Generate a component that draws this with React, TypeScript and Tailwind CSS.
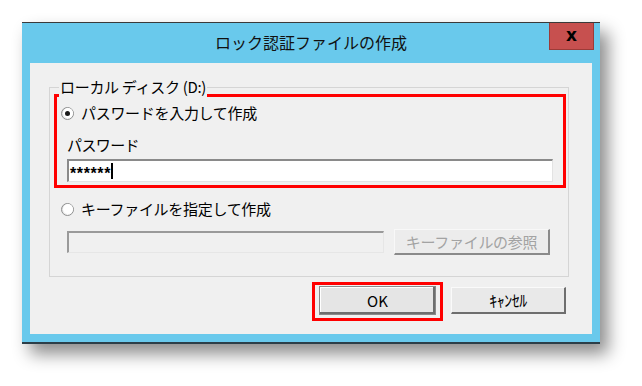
import React from "react";

const jp = { fontFamily: '"Noto Sans CJK JP", "Noto Sans", sans-serif' };

function Radio({ checked }: { checked?: boolean }) {
  return (
    <span className="relative flex h-[13px] w-[13px] shrink-0 items-center justify-center rounded-full border border-[#8e8f8f] bg-gradient-to-br from-[#d8d8d8] to-white">
      <span className="h-[10px] w-[10px] rounded-full bg-white flex items-center justify-center">
        {checked && <span className="h-[5px] w-[5px] rounded-full bg-[#1a1a1a]" />}
      </span>
    </span>
  );
}

export default function App() {
  return (
    <div className="h-[386px] w-[642px] overflow-hidden bg-white pl-[22px] pt-[22px]" style={jp}>
      <div className="flex h-[322px] w-[578px] flex-col border-t border-b-2 border-t-[#3a3a3a] border-b-[#2c3e48] bg-[#69c9ec] px-[8px] pb-[8px] shadow-[8px_10px_16px_rgba(0,0,0,0.45)]">
        {/* title bar */}
        <div className="relative flex h-[40px] shrink-0 items-center justify-center">
          <span className="text-[16px] leading-none text-[#111] pb-[2px]">ロック認証ファイルの作成</span>
          <div className="absolute right-[-2px] top-0 flex h-[27px] w-[45px] items-center justify-center border border-t-0 border-[#9c3b38] bg-[#c7504f]">
            <span className="pb-[2px] text-[17px] font-bold leading-none text-black" style={{ fontFamily: '"DejaVu Sans", sans-serif' }}>x</span>
          </div>
        </div>
        {/* content */}
        <div className="flex flex-1 flex-col bg-[#f0f0f0] pl-[19px] pt-[24px]">
          {/* group box */}
          <div className="relative h-[190px] w-[520px] border border-[#d5d5d5]">
            <span className="absolute left-[9px] top-[-11px] bg-[#f0f0f0] px-[1px] text-[15px] leading-[20px] tracking-[-0.3px] text-black">ローカル ディスク (D:)</span>
            <div className="pl-[4px] pt-[6px]">
              {/* red highlight */}
              <div className="flex h-[94px] w-[512px] flex-col border-[3px] border-[#ff0000]">
                <div className="mt-[6px] flex h-[20px] items-center pl-[4px]">
                  <Radio checked />
                  <span className="ml-[7px] text-[15px] leading-[20px] tracking-[-0.3px] text-black">パスワードを入力して作成</span>
                </div>
                <div className="mt-[12px] h-[20px] pl-[10px] text-[15px] leading-[20px] tracking-[-0.6px] text-black">パスワード</div>
                <div className="ml-[10px] mt-[4px] flex h-[23px] w-[486px] items-center border-b border-l-2 border-r border-t-2 border-b-[#e3e3e3] border-l-[#8a8a8a] border-r-[#e3e3e3] border-t-[#8a8a8a] bg-white pl-[1px]">
                  <span className="pt-[5px] text-[16px] font-bold leading-none tracking-[0.6px] text-black" style={{ fontFamily: '"Liberation Sans", sans-serif' }}>******</span>
                  <span className="h-[16px] w-[2px] bg-black" />
                </div>
              </div>
              <div className="mt-[11px] flex h-[20px] items-center pl-[7px]">
                <Radio />
                <span className="ml-[7px] text-[15px] leading-[20px] tracking-[-0.3px] text-black">キーファイルを指定して作成</span>
              </div>
              <div className="mt-[10px] flex h-[26px] items-center pl-[13px]">
                <div className="h-[22px] w-[317px] border-b border-l-2 border-r border-t-2 border-b-[#e6e6e6] border-l-[#9a9a9a] border-r-[#e6e6e6] border-t-[#9a9a9a] bg-[#f0f0f0]" />
                <div className="ml-[10px] flex h-[26px] w-[156px] items-center justify-center border-b-2 border-l border-r-2 border-t border-b-[#8a8a8a] border-l-[#f8f8f8] border-r-[#8a8a8a] border-t-[#f8f8f8] bg-[#ececec]">
                  <span className="text-[15px] leading-none tracking-[-0.3px] text-[#a3a3a3]">キーファイルの参照</span>
                </div>
              </div>
            </div>
          </div>
          {/* buttons */}
          <div className="mr-[26px] mt-[5px] flex items-start justify-end">
            <div className="border-[3px] border-[#ff0000] px-[4px] pb-[3px] pt-[1px]">
              <div className="flex h-[29px] w-[117px] items-center justify-center border border-[#8a8a8a] bg-[#e5e5e5] shadow-[inset_-2px_-2px_0_#6e6e6e,inset_1px_1px_0_#ffffff]">
                <span className="text-[15px] leading-none text-black">OK</span>
              </div>
            </div>
            <div className="ml-[8px] mt-[5px] flex h-[27px] w-[115px] items-center justify-center border-b-2 border-l border-r-2 border-t border-b-[#6e6e6e] border-l-[#fafafa] border-r-[#6e6e6e] border-t-[#fafafa] bg-[#e9e9e9]">
              <span className="text-[16px] leading-none tracking-[-0.5px] text-black">ｷｬﾝｾﾙ</span>
            </div>
          </div>
        </div>
      </div>
    </div>
  );
}
